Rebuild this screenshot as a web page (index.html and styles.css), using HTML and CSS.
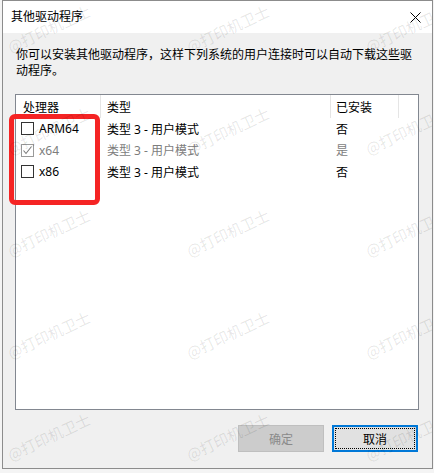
FILE: index.html
```html
<!DOCTYPE html>
<html lang="zh-CN">
<head>
<meta charset="utf-8">
<title>其他驱动程序</title>
<link rel="stylesheet" href="styles.css">
</head>
<body>
<div class="window">
  <div class="titlebar">
    <span class="title">其他驱动程序</span>
    <svg class="close" width="11" height="11" viewBox="0 0 11 11"><path d="M0.5 0.5 L10.5 10.5 M10.5 0.5 L0.5 10.5" stroke="#000" stroke-width="1" fill="none"/></svg>
  </div>
  <div class="content">
    <p class="desc">你可以安装其他驱动程序，这样下列系统的用户连接时可以自动下载这些驱动程序。</p>
    <div class="listbox">
      <div class="header">
        <div class="cell c1">处理器</div>
        <div class="cell c2">类型</div>
        <div class="cell c3">已安装</div>
      </div>
      <div class="row">
        <div class="cell c1"><span class="cb"></span>ARM64</div>
        <div class="cell c2">类型 3 - 用户模式</div>
        <div class="cell c3">否</div>
      </div>
      <div class="row disabled">
        <div class="cell c1"><span class="cb checked"><svg width="11" height="11" viewBox="0 0 11 11"><path d="M1.5 5.5 L4 8.5 L9.5 1.5" stroke="#7a7a7a" stroke-width="1.1" fill="none"/></svg></span>x64</div>
        <div class="cell c2">类型 3 - 用户模式</div>
        <div class="cell c3">是</div>
      </div>
      <div class="row">
        <div class="cell c1"><span class="cb"></span>x86</div>
        <div class="cell c2">类型 3 - 用户模式</div>
        <div class="cell c3">否</div>
      </div>
    </div>
    <div class="buttons">
      <button class="btn btn-disabled">确定</button>
      <button class="btn btn-focus">取消</button>
    </div>
  </div>
  <div class="highlight"></div>
  <div class="watermarks">
    <span class="wm">@打印机卫士</span><span class="wm">@打印机卫士</span><span class="wm">@打印机卫士</span>
    <span class="wm">@打印机卫士</span><span class="wm">@打印机卫士</span><span class="wm">@打印机卫士</span>
    <span class="wm">@打印机卫士</span><span class="wm">@打印机卫士</span><span class="wm">@打印机卫士</span>
    <span class="wm">@打印机卫士</span><span class="wm">@打印机卫士</span><span class="wm">@打印机卫士</span>
    <span class="wm">@打印机卫士</span><span class="wm">@打印机卫士</span><span class="wm">@打印机卫士</span>
  </div>
</div>
</body>
</html>
```
FILE: styles.css
```css
* { box-sizing: border-box; }
html, body { margin: 0; padding: 0; }
body {
  background: #f4f4f4;
  font-family: "Noto Sans", "Noto Sans CJK SC", sans-serif;
  font-size: 12px;
  color: #000;
}
.window {
  position: relative;
  margin-left: 2px;
  width: 431px;
  height: 469px;
  border: 1px solid #8c8c8c;
  background: #f0f0f0;
  overflow: hidden;
  display: flex;
  flex-direction: column;
}
.titlebar {
  height: 32px;
  background: #fff;
  display: flex;
  align-items: center;
  padding-left: 8px;
  padding-right: 11px;
  flex: none;
}
.title { line-height: 16px; }
.close { margin-left: auto; display: block; }
.content {
  flex: 1;
  display: flex;
  flex-direction: column;
  padding: 14px 13px 0 12px;
}
.desc {
  margin: 0 0 15px 1px;
  width: 400px;
  line-height: 16px;
}
.listbox {
  height: 316px;
  border: 1px solid #828790;
  background: #fff;
  flex: none;
}
.header {
  height: 23px;
  display: flex;
}
.header .cell {
  display: flex;
  align-items: center;
  border-right: 1px solid #e5e5e5;
}
.header .c1 { padding-left: 7px; }
.cell { flex: none; }
.c1 { width: 85px; padding-left: 5px; }
.c2 { width: 230px; padding-left: 6px; }
.c3 { width: 68px; padding-left: 5px; }
.row {
  height: 21.5px;
  display: flex;
}
.row .cell {
  display: flex;
  align-items: center;
}
.row.disabled { color: #7d7d7d; }
.cb {
  width: 13px;
  height: 13px;
  border: 1px solid #333;
  background: #fff;
  margin-right: 5px;
  display: flex;
  align-items: center;
  justify-content: center;
}
.cb.checked { border-color: #9a9a9a; }
.cb svg { display: block; }
.buttons {
  display: flex;
  justify-content: flex-end;
  gap: 8px;
  margin-top: 15px;
  margin-right: 1px;
}
.btn {
  width: 86px;
  height: 27px;
  font-family: "Noto Sans", "Noto Sans CJK SC", sans-serif;
  font-size: 12px;
  padding: 0;
}
.btn-disabled {
  background: #cccccc;
  border: 1px solid #bfbfbf;
  color: #8a8a8a;
}
.btn-focus {
  background: #e1e1e1;
  border: 2px solid #0078d7;
  color: #000;
  outline: 1px dotted #000;
  outline-offset: -4px;
}
.highlight {
  position: absolute;
  left: 6px;
  top: 113px;
  width: 91px;
  height: 91px;
  border: 5px solid #f52424;
  border-radius: 6px;
  pointer-events: none;
}
.watermarks {
  position: absolute;
  left: -44px;
  top: -24px;
  display: grid;
  grid-template-columns: repeat(3, 179px);
  grid-template-rows: repeat(5, 102px);
  pointer-events: none;
}
.wm {
  display: flex;
  align-items: center;
  justify-content: center;
  font-family: "Noto Sans CJK SC", sans-serif;
  font-size: 15px;
  color: rgba(0, 0, 0, 0.1);
  transform: rotate(-25deg);
  white-space: nowrap;
}
```
